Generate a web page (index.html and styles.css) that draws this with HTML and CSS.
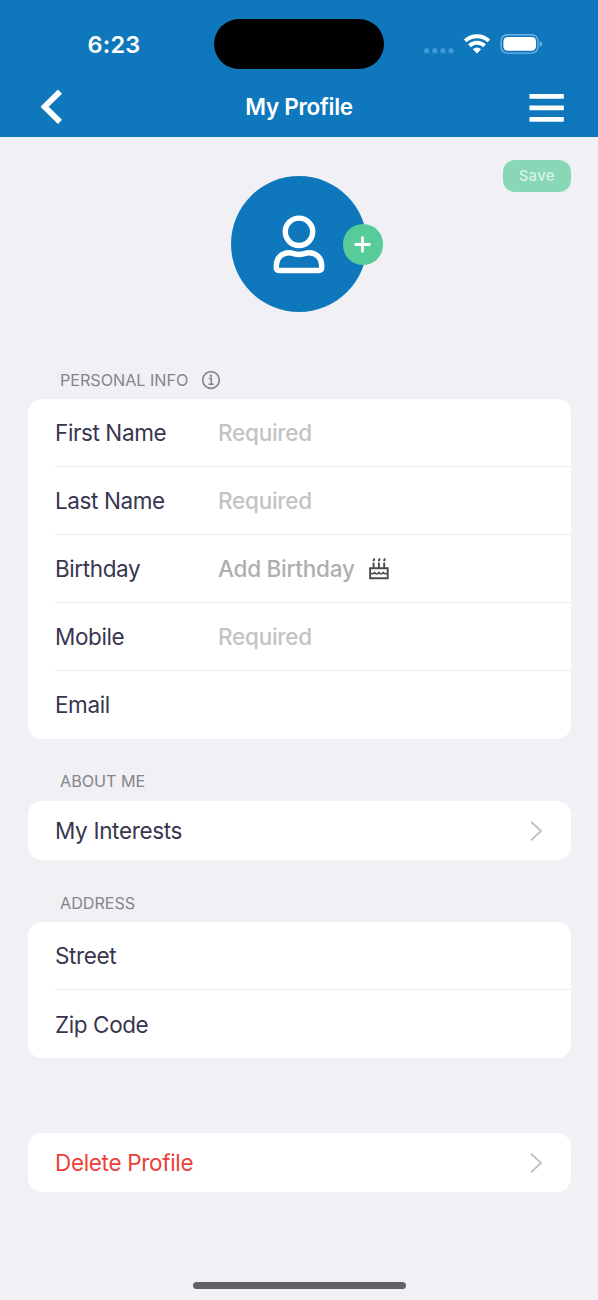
FILE: index.html
```
<!DOCTYPE html>
<html lang="en">
<head>
<meta charset="utf-8">
<title>My Profile</title>
<link rel="stylesheet" href="styles.css">
</head>
<body>
<div class="screen">
  <header class="header">
    <div class="status">
      <div class="time"><span class="time-text">6:23</span></div>
      <div class="island"></div>
      <div class="indicators">
        <svg width="120" height="24" viewBox="0 0 120 24" fill="none">
          <g fill="#4199d8"><circle cx="4.700" cy="18.700" r="2.600"/><circle cx="12.800" cy="18.700" r="2.600"/><circle cx="20.900" cy="18.700" r="2.600"/><circle cx="29" cy="18.700" r="2.600"/></g>
          <g stroke="#fff" stroke-width="4">
            <path d="M43.200 8.900a17.200 17.200 0 0 1 23.600 0"/>
            <path d="M47.500 13.800a10.800 10.800 0 0 1 15 0"/>
          </g>
          <path d="M50.900 17.200a5.800 5.800 0 0 1 8.200 0L55 21.400z" fill="#fff"/>
          <rect x="79.100" y="2.700" width="36.800" height="18.400" rx="6" stroke="#70b2e4" stroke-width="1.400"/>
          <rect x="81.400" y="5" width="32.600" height="13.800" rx="4.200" fill="#fff"/>
          <path d="M117.700 9c3 .8 3 5.200 0 6z" fill="#70b2e4"/>
        </svg>
      </div>
    </div>
    <nav class="nav">
      <svg class="back" width="24" height="36" viewBox="0 0 24 36" fill="none" stroke="#fff" stroke-width="5.800"><path d="M21 2.600 5.600 17.800l15.400 15"/></svg>
      <h1 class="title">My Profile</h1>
      <svg class="menu" width="35" height="28" viewBox="0 0 35 28" fill="#fff"><path d="M.5 0h34.300v4.800H.5zM.5 11.500h34.300v4.800H.5zM.5 22.900h34.300v4.800H.5z"/></svg>
    </nav>
  </header>

  <main class="content">
    <section class="hero">
      <div class="avatar">
        <svg width="54" height="62" viewBox="0 0 54 62" fill="none" stroke="#fff" stroke-width="5.400">
          <ellipse cx="27" cy="18.800" rx="13.700" ry="13.700"/>
          <path d="M17 39.700C21 39.700 22.500 41.500 27 41.500S33 39.700 37 39.700C44.500 39.700 49.700 45.500 49.700 52.500V54.500Q49.700 57.500 46.700 57.500H7.300Q4.300 57.500 4.300 54.500V52.500C4.300 45.500 9.500 39.700 17 39.700Z"/>
        </svg>
        <div class="add"><svg width="17" height="17" viewBox="0 0 16 16" stroke="#fff" stroke-width="2.600" stroke-linecap="round"><path d="M8 1.500v13M1.500 8h13"/></svg></div>
      </div>
      <button class="save"><span class="save-text">Save</span></button>
    </section>

    <h2 class="section personal"><span class="t-personal">PERSONAL INFO</span>
      <svg width="20" height="20" viewBox="0 0 20 20" fill="none" stroke="#85858a" stroke-width="1.700"><circle cx="10" cy="10" r="8.300"/><path d="M7.800 8.600h2.500v5.500M7.500 14.200h5.200" stroke-width="1.500"/><circle cx="10" cy="5.700" r="1.250" fill="#85858a" stroke="none"/></svg>
    </h2>
    <div class="card">
      <div class="row"><span class="label">First Name</span><span class="value">Required</span></div>
      <div class="row"><span class="label">Last Name</span><span class="value">Required</span></div>
      <div class="row"><span class="label">Birthday</span><span class="value birthday">Add Birthday</span>
        <svg class="cake" width="20" height="23" viewBox="0 0 20 23" fill="none" stroke="#4b4b4d" stroke-width="1.900"><path d="M1.100 11.300h17.600v9.900H1.100zM4.600 5.500v5.500M9.900 5.500v5.500M15.200 5.500v5.500"/><path d="M1.300 15.800c1.700 1.700 3 1.200 4.200-.3 1.300 1.900 3 1.900 4.400 0 1.400 1.900 3.100 1.900 4.400 0 1.200 1.500 2.500 2 4.200.3" stroke-width="1.500"/><g fill="#4b4b4d" stroke="none"><path d="M5.500.8c1 1.700.7 3.500-.9 3.500s-1.300-2 .9-3.500zM10.800.8c1 1.700.7 3.500-.9 3.500s-1.300-2 .9-3.500zM16.100.8c1 1.700.7 3.500-.9 3.500s-1.300-2 .9-3.500z"/></g></svg>
      </div>
      <div class="row"><span class="label">Mobile</span><span class="value">Required</span></div>
      <div class="row"><span class="label">Email</span></div>
    </div>

    <h2 class="section about"><span>ABOUT ME</span></h2>
    <div class="card">
      <div class="row link"><span class="label wide">My Interests</span><svg width="14" height="22" viewBox="0 0 14 22" fill="none" stroke="#c2c2c4" stroke-width="1.900"><path d="M1 1.700 11 11l-10 9.300"/></svg></div>
    </div>

    <h2 class="section"><span>ADDRESS</span></h2>
    <div class="card">
      <div class="row"><span class="label">Street</span></div>
      <div class="row"><span class="label">Zip Code</span></div>
    </div>

    <div class="card delete">
      <div class="row link"><span class="label wide">Delete Profile</span><svg width="14" height="22" viewBox="0 0 14 22" fill="none" stroke="#c2c2c4" stroke-width="1.900"><path d="M1 1.700 11 11l-10 9.300"/></svg></div>
    </div>
  </main>
  <div class="home"></div>
</div>
</body>
</html>
```
FILE: styles.css
```
* { box-sizing: border-box; }
body { margin: 0; background: #f0f0f5; font-family: Inter, "Liberation Sans", sans-serif; }
.screen { width: 598px; height: 1300px; display: flex; flex-direction: column; background: #f0f0f5; overflow: hidden; }
.header { height: 136.500px; background: #0f77bc; color: #fff; flex: none; }
.status { display: grid; grid-template-columns: 214px 170px 214px; padding-top: 19px; height: 69px; }
.time { padding-left: 87.500px; font-size: 23.500px; font-weight: 600; line-height: 51px; letter-spacing: .2px; }
.island { height: 50px; border-radius: 25px; background: #000; }
.indicators { padding: 13px 0 0 38px; }
.indicators svg { display: block; }
.nav { height: 67px; display: grid; grid-template-columns: 35px 1fr 35px; align-items: center; padding: 9px 34px 0 34px; }
.back { margin-left: 5px; }
.title { margin: 0; font-size: 22.500px; line-height: 28px; font-weight: 600; letter-spacing: -.3px; text-align: center; }
.menu { margin-top: 2px; }
.content { padding: 0 27px; }
.hero { display: grid; grid-template-columns: 1fr 136px 1fr; height: 223px; padding-top: 23px; align-items: start; }
.avatar { grid-column: 2; width: 136px; height: 136px; margin-top: 16.500px; border-radius: 50%; background: #0f77bc; display: flex; align-items: center; justify-content: center; position: relative; }
.add { position: absolute; left: 111.500px; top: 48px; width: 40.500px; height: 40.500px; border-radius: 50%; background: #58cb9b; display: flex; align-items: center; justify-content: center; }
.save { justify-self: end; width: 68.500px; height: 32.500px; border: 0; border-radius: 12px; background: #88d8b7; color: #d9f4e8; font: 500 14.800px/32px Inter, sans-serif; letter-spacing: .4px; padding: 0; }
.section { margin: 0; height: 62px; padding: 33px 0 0 33px; font-size: 16.200px; line-height: 20px; font-weight: 400; color: #85858a; letter-spacing: -.04px; display: flex; gap: 12.500px; }
.personal { height: 39.500px; padding-top: 10px; }
.about { padding-top: 32.400px; }
.card { background: #fff; border-radius: 14px; margin-left: .5px; padding-left: 27.500px; overflow: hidden; }
.row { height: 68px; display: flex; align-items: center; border-bottom: 1px solid #ededf0; font-size: 22.500px; line-height: 28px; }
.row:last-child { border-bottom: 0; height: 67.500px; }
.label { width: 163px; color: #38364f; letter-spacing: -.4px; white-space: nowrap; }
.value { color: #c3c3c5; font-weight: 500; letter-spacing: -.25px; }
.birthday { color: #aeaeb0; }
.cake { margin-left: 14.500px; }
.row.link { height: 59.500px; justify-content: space-between; padding: 1px 27.500px 0 0; }
.section:not(.personal):not(.about) + .card .row { padding-top: 1.500px; }
.wide { width: auto; letter-spacing: -.33px; }
.delete { margin-top: 75px; }
.delete .label { color: #ec4138; }
.home { width: 213px; height: 7px; border-radius: 4px; background: #626266; margin: auto auto 11px; }
```
